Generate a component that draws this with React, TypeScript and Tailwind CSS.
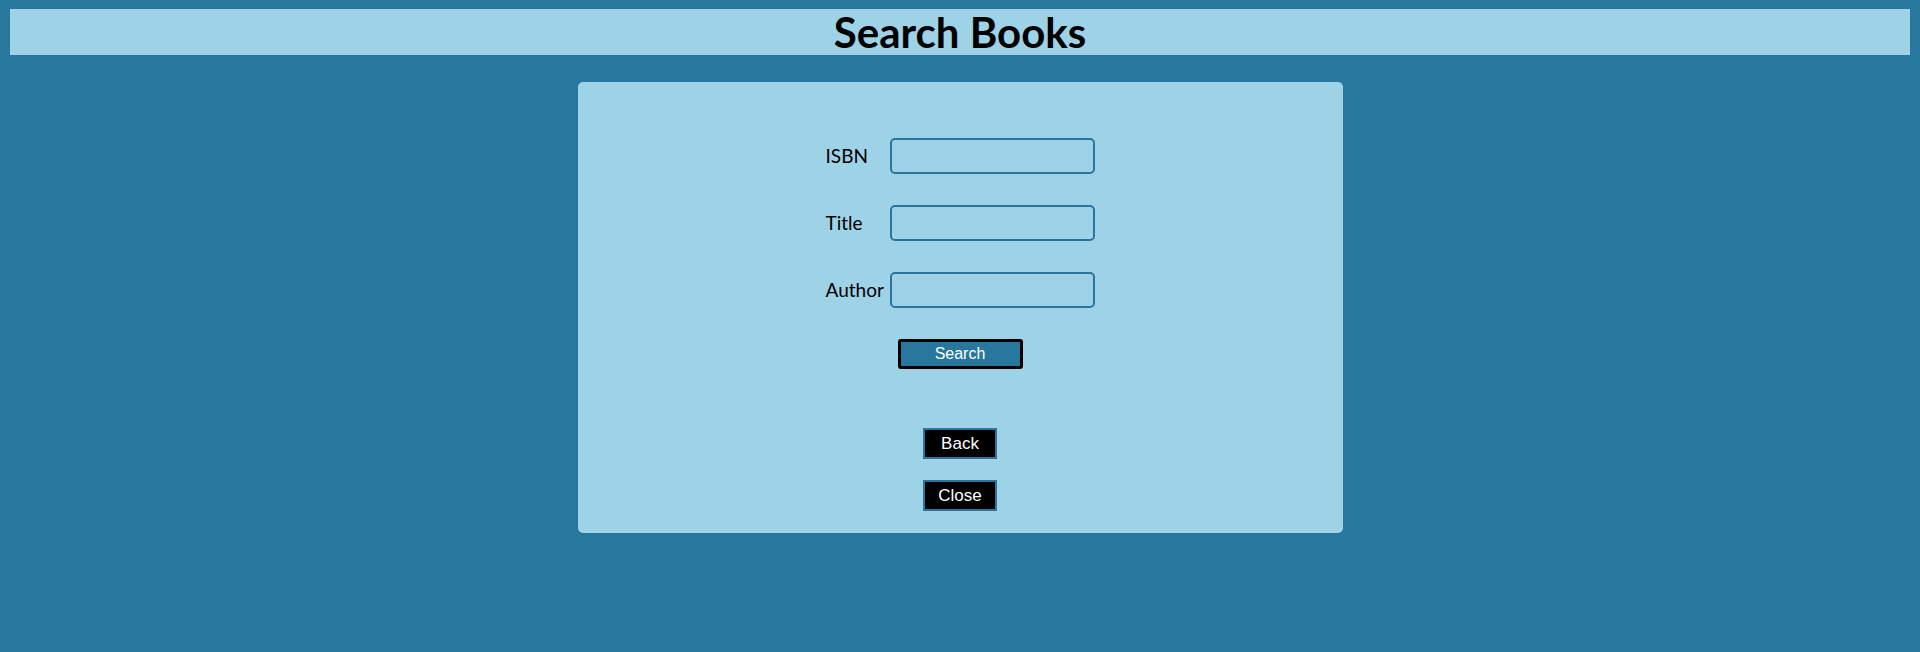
import React from 'react';

const fields = ['ISBN', 'Title', 'Author'];

export default function App() {
  return (
    <div className="min-h-screen bg-[#28779e] px-[10px] pt-[9px] pb-10">
      <header className="h-[46px] bg-[#9ed2e7] flex items-center justify-center">
        <h1 className="text-[42px] font-bold text-black font-['Lato','Open_Sans',sans-serif] leading-none">
          Search Books
        </h1>
      </header>

      <section className="mt-[27px] mx-auto w-[765px] h-[451px] rounded-[5px] bg-[#9ed2e7] flex flex-col items-center pt-[56px]">
        <form className="flex flex-col items-center" onSubmit={(e) => e.preventDefault()}>
          <div className="grid grid-cols-[64px_205px] gap-y-[31px] items-center">
            {fields.map((f) => (
              <React.Fragment key={f}>
                <label className="text-[19px] text-black font-['Lato','Open_Sans',sans-serif]">{f}</label>
                <input
                  type="text"
                  className="h-[36px] w-[205px] bg-transparent border-2 border-[#2a759e] rounded-[5px] px-2 outline-none"
                />
              </React.Fragment>
            ))}
          </div>
          <button
            type="submit"
            className="mt-[31px] w-[125px] h-[30px] bg-[#28779e] border-[3px] border-black rounded-[3px] text-white text-[16px] font-['Liberation_Sans',Arial,sans-serif]"
          >
            Search
          </button>
        </form>

        <button className="mt-[59px] w-[74px] h-[31px] bg-black border-2 border-[#2a759e] text-white text-[17px] font-['Liberation_Sans',Arial,sans-serif]">
          Back
        </button>
        <button className="mt-[21px] w-[74px] h-[31px] bg-black border-2 border-[#2a759e] text-white text-[17px] font-['Liberation_Sans',Arial,sans-serif]">
          Close
        </button>
      </section>
    </div>
  );
}
